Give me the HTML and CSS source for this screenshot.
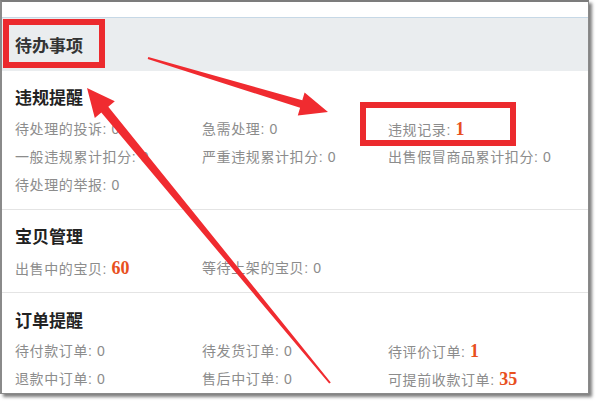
FILE: index.html
```html
<!DOCTYPE html>
<html lang="zh-CN">
<head>
<meta charset="utf-8">
<title>待办事项</title>
<link rel="stylesheet" href="styles.css">
</head>
<body>
<div class="frame">
  <div class="topstrip"></div>
  <div class="header"><span class="htitle">待办事项</span></div>

  <section class="sec">
    <h3 class="title">违规提醒</h3>
    <div class="grid">
      <div class="item">待处理的投诉: 0</div>
      <div class="item">急需处理: 0</div>
      <div class="item">违规记录: <span class="num">1</span></div>
      <div class="item">一般违规累计扣分: 0</div>
      <div class="item">严重违规累计扣分: 0</div>
      <div class="item">出售假冒商品累计扣分: 0</div>
      <div class="item">待处理的举报: 0</div>
    </div>
  </section>

  <section class="sec">
    <h3 class="title">宝贝管理</h3>
    <div class="grid">
      <div class="item">出售中的宝贝: <span class="num">60</span></div>
      <div class="item">等待上架的宝贝: 0</div>
    </div>
  </section>

  <section class="sec last">
    <h3 class="title">订单提醒</h3>
    <div class="grid">
      <div class="item">待付款订单: 0</div>
      <div class="item">待发货订单: 0</div>
      <div class="item">待评价订单: <span class="num">1</span></div>
      <div class="item">退款中订单: 0</div>
      <div class="item">售后中订单: 0</div>
      <div class="item">可提前收款订单: <span class="num">35</span></div>
    </div>
  </section>
</div>

<div class="mark mark-header"></div>
<div class="mark mark-record"></div>

<svg class="arrows" width="600" height="404" viewBox="0 0 600 404">
  <polygon points="328,112 304.6,92.5 302.3,100.2 148.3,57 147.7,59 300.1,107.8 297.8,115.5"/>
  <polygon points="87,88 114.8,101.3 108.3,106.7 330.8,382.4 329.2,383.6 101.3,112.5 94.8,117.9"/>
</svg>
</body>
</html>
```

FILE: styles.css
```css
html, body {
  margin: 0;
  padding: 0;
  background: #ffffff;
}

body {
  width: 600px;
  height: 404px;
  overflow: hidden;
  position: relative;
  font-family: "Liberation Sans", "Noto Sans CJK SC", sans-serif;
}

.frame {
  width: 586px;
  border-top: 2px solid #7c7c7c;
  border-left: 2px solid #8a8a8a;
  border-right: 1px solid #8a8a8a;
  border-bottom: 1px solid #8a8a8a;
  background: #ffffff;
  box-shadow: 3px 3px 3px rgba(0, 0, 0, 0.5);
}

.topstrip {
  height: 15px;
  border-bottom: 1px solid #c6d8e6;
}

.header {
  height: 53px;
  background: #eaedef;
  display: flex;
  align-items: center;
  padding-left: 13px;
}

.htitle {
  font-family: "Noto Sans CJK SC", sans-serif;
  font-weight: bold;
  font-size: 17px;
  color: #333333;
  line-height: 24px;
}

.sec {
  padding: 14px 0 10px 13px;
  border-bottom: 1px solid #e4e4e4;
}

.sec.last {
  border-bottom: none;
  padding-top: 15px;
  padding-bottom: 0;
}

.title {
  margin: 0 0 6px 0;
  font-family: "Noto Sans CJK SC", sans-serif;
  font-weight: bold;
  font-size: 17px;
  line-height: 24px;
  color: #222222;
}

.sec.last .title {
  margin-bottom: 5px;
}

.grid {
  display: grid;
  grid-template-columns: 187px 186px 1fr;
}

.item {
  font-size: 14px;
  letter-spacing: 0.6px;
  line-height: 28px;
  height: 28px;
  color: #8c8c8c;
  white-space: nowrap;
}

.num {
  font-family: "Liberation Serif", "DejaVu Serif", serif;
  font-weight: bold;
  font-size: 18px;
  letter-spacing: 0;
  color: #e8501e;
}

.mark {
  position: absolute;
  border: 6px solid #ec2a2e;
  box-sizing: border-box;
}

.mark-header {
  left: 3px;
  top: 19px;
  width: 102px;
  height: 49px;
}

.mark-record {
  left: 360px;
  top: 102px;
  width: 156px;
  height: 44px;
}

.arrows {
  position: absolute;
  left: 0;
  top: 0;
  pointer-events: none;
}

.arrows polygon {
  fill: #f02b30;
}
```
